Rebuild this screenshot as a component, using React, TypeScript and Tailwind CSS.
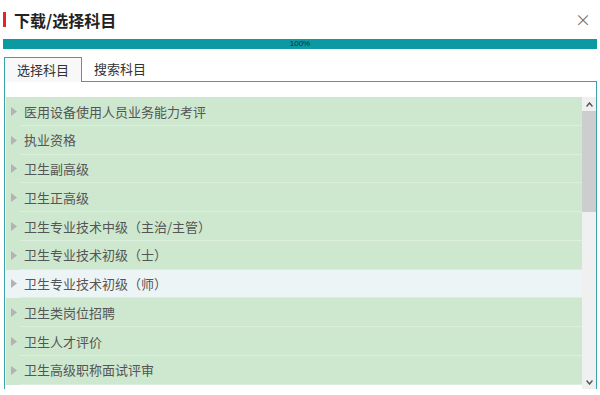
const items = [
  '医用设备使用人员业务能力考评',
  '执业资格',
  '卫生副高级',
  '卫生正高级',
  '卫生专业技术中级（主治/主管）',
  '卫生专业技术初级（士）',
  '卫生专业技术初级（师）',
  '卫生类岗位招聘',
  '卫生人才评价',
  '卫生高级职称面试评审',
];

export default function App() {
  return (
    <div
      className="w-[600px] h-[395px] overflow-hidden bg-white text-[#333]"
      style={{ fontFamily: '"Microsoft YaHei", "Noto Sans CJK SC", sans-serif' }}
    >
      {/* header */}
      <div className="h-[39px] flex items-center pl-[3px] pr-[9px]">
        <div className="w-[3px] h-[15px] bg-[#e0262b]" />
        <div className="ml-[8px] text-[16px] font-bold text-[#222] leading-none">下载/选择科目</div>
        <div className="ml-auto text-[#777] text-[16px] leading-none pb-[1px]">×</div>
      </div>

      {/* progress */}
      <div className="mx-[3px] h-[10px] bg-[#0b9aa1] flex items-center justify-center">
        <span className="text-[8px] leading-none text-[#0d2a2c]" style={{ fontFamily: '"Liberation Sans", sans-serif' }}>100%</span>
      </div>

      {/* tabs */}
      <div className="mt-[8px] flex pl-[4px] pr-[3px] h-[25px]">
        <div className="w-[78px] border border-b-0 border-[#3aa3a8] bg-[#f8f8f8] flex items-center justify-center text-[13px] text-[#333]">
          选择科目
        </div>
        <div className="flex-1 border-b border-[#3aa3a8] flex items-center pl-[12px] text-[13px] text-[#333]">
          搜索科目
        </div>
      </div>

      {/* panel */}
      <div className="ml-[4px] mr-[3px] border-l border-r border-[#3aa3a8] pt-[15px] pl-[1px] flex">
        <div className="flex-1 flex flex-col">
          {items.map((t, i) => (
            <div
              key={t}
              className={`relative h-[28.75px] flex items-center ${i === 6 ? 'bg-[#edf4f6]' : 'bg-[#cde8cf]'}`}
            >
              <svg width="6" height="9" viewBox="0 0 6 9" className="ml-[5px]">
                <path d="M0 0 L6 4.5 L0 9 Z" fill="#b3b3b3" />
              </svg>
              <span className="ml-[7px] text-[13px] text-[#555]">{t}</span>
              <div className="absolute left-[14px] right-0 bottom-0 h-px bg-[#dcefdd]" />
            </div>
          ))}
        </div>
        <div className="w-[14px] h-[292px] bg-[#f0f0f0] flex flex-col">
          <div className="h-[14px] flex items-center justify-center">
            <svg width="7" height="5" viewBox="0 0 7 5">
              <path d="M0.5 4.5 L3.5 1 L6.5 4.5" fill="none" stroke="#555" strokeWidth="1.5" />
            </svg>
          </div>
          <div className="h-[101px] bg-[#cdcdcd]" />
          <div className="flex-1" />
          <div className="h-[14px] flex items-center justify-center">
            <svg width="7" height="5" viewBox="0 0 7 5">
              <path d="M0.5 0.5 L3.5 4 L6.5 0.5" fill="none" stroke="#555" strokeWidth="1.5" />
            </svg>
          </div>
        </div>
      </div>
    </div>
  );
}
